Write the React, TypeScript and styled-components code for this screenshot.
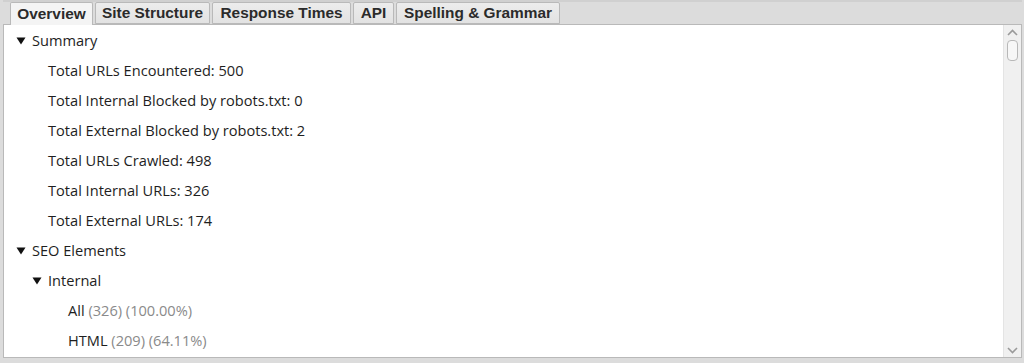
import React from 'react';
import styled, { createGlobalStyle } from 'styled-components';

const GlobalStyle = createGlobalStyle`
  html, body {
    margin: 0;
    padding: 0;
    background: #dcdcdc;
  }
`;

const Frame = styled.div`
  width: 1024px;
  height: 363px;
  box-sizing: border-box;
  padding: 0 2px 5px 3px;
  display: flex;
  flex-direction: column;
  background: #dcdcdc;
`;

const TabBar = styled.div`
  display: flex;
  align-items: flex-end;
  height: 24px;
  padding-left: 7px;
  gap: 2px;
  background: linear-gradient(#d0d0d0 0, #d0d0d0 2px, #dcdcdc 2px);
`;

const Tab = styled.div<{ $active?: boolean; $width: number }>`
  box-sizing: border-box;
  width: ${({ $width }) => $width}px;
  height: ${({ $active }) => ($active ? '23px' : '22px')};
  display: flex;
  align-items: center;
  justify-content: center;
  font-family: 'Liberation Sans', Arial, sans-serif;
  font-weight: bold;
  font-size: 15.4px;
  color: #2b2b2b;
  white-space: nowrap;
  background: ${({ $active }) => ($active ? '#f4f4f4' : 'linear-gradient(#ececec, #e2e2e2)')};
  border: 1px solid #b9b9b9;
  border-bottom: ${({ $active }) => ($active ? 'none' : '1px solid #b9b9b9')};
  border-radius: 2px 2px 0 0;
  margin-bottom: ${({ $active }) => ($active ? '-1px' : '0')};
  position: relative;
  z-index: ${({ $active }) => ($active ? 1 : 0)};
`;

const Panel = styled.div`
  flex: 1;
  display: flex;
  background: #fff;
  border: 1px solid #b9b9b9;
  min-height: 0;
`;

const Tree = styled.div`
  flex: 1;
  font-family: 'Open Sans', 'Noto Sans', sans-serif;
  font-size: 14.6px;
  color: #1e1e1e;
`;

const Row = styled.div<{ $indent: number }>`
  height: 30px;
  line-height: 30px;
  padding-left: ${({ $indent }) => $indent}px;
  white-space: pre;
  overflow: hidden;
`;

const Arrow = styled.span`
  display: inline-block;
  width: 16px;
  vertical-align: middle;
  line-height: 0;
  margin-top: -3px;
  svg {
    display: block;
  }
`;

const Muted = styled.span`
  color: #8a8a8a;
`;

const ScrollBar = styled.div`
  width: 17px;
  display: flex;
  flex-direction: column;
  align-items: center;
  background: #f0f0f0;
  border-left: 1px solid #e4e4e4;
`;

const ScrollButton = styled.div`
  height: 14px;
  width: 100%;
  display: flex;
  align-items: center;
  justify-content: center;
`;

const Track = styled.div`
  flex: 1;
  width: 100%;
  display: flex;
  flex-direction: column;
  align-items: center;
`;

const Thumb = styled.div`
  width: 11px;
  height: 21px;
  box-sizing: border-box;
  border: 1px solid #b8b8b8;
  border-radius: 4px;
  background: #f7f7f7;
  margin-top: 1px;
`;

const Triangle = () => (
  <svg width="10" height="8" viewBox="0 0 10 8">
    <path d="M0.5 0.5 L9.5 0.5 L5 7.5 Z" fill="#111" />
  </svg>
);

const Chevron = ({ up }: { up?: boolean }) => (
  <svg width="11" height="7" viewBox="0 0 11 7">
    <path
      d={up ? 'M1 6 L5.5 1.5 L10 6' : 'M1 1 L5.5 5.5 L10 1'}
      fill="none"
      stroke="#9a9a9a"
      strokeWidth="1.6"
    />
  </svg>
);

type Item = { indent: number; open?: boolean; label: string; extra?: string };

const items: Item[] = [
  { indent: 12, open: true, label: 'Summary' },
  { indent: 44, label: 'Total URLs Encountered: 500' },
  { indent: 44, label: 'Total Internal Blocked by robots.txt: 0' },
  { indent: 44, label: 'Total External Blocked by robots.txt: 2' },
  { indent: 44, label: 'Total URLs Crawled: 498' },
  { indent: 44, label: 'Total Internal URLs: 326' },
  { indent: 44, label: 'Total External URLs: 174' },
  { indent: 12, open: true, label: 'SEO Elements' },
  { indent: 28, open: true, label: 'Internal' },
  { indent: 64, label: 'All', extra: ' (326) (100.00%)' },
  { indent: 64, label: 'HTML', extra: ' (209) (64.11%)' },
];

const tabs = [
  { label: 'Overview', width: 83 },
  { label: 'Site Structure', width: 115 },
  { label: 'Response Times', width: 139 },
  { label: 'API', width: 41 },
  { label: 'Spelling & Grammar', width: 164 },
];

export default function App() {
  return (
    <>
      <GlobalStyle />
      <Frame>
        <TabBar>
          {tabs.map((t, i) => (
            <Tab key={t.label} $active={i === 0} $width={t.width}>
              {t.label}
            </Tab>
          ))}
        </TabBar>
        <Panel>
          <Tree>
            {items.map((it, i) => (
              <Row key={i} $indent={it.indent}>
                {it.open && (
                  <Arrow>
                    <Triangle />
                  </Arrow>
                )}
                {it.label}
                {it.extra && <Muted>{it.extra}</Muted>}
              </Row>
            ))}
          </Tree>
          <ScrollBar>
            <ScrollButton>
              <Chevron up />
            </ScrollButton>
            <Track>
              <Thumb />
            </Track>
            <ScrollButton>
              <Chevron />
            </ScrollButton>
          </ScrollBar>
        </Panel>
      </Frame>
    </>
  );
}
